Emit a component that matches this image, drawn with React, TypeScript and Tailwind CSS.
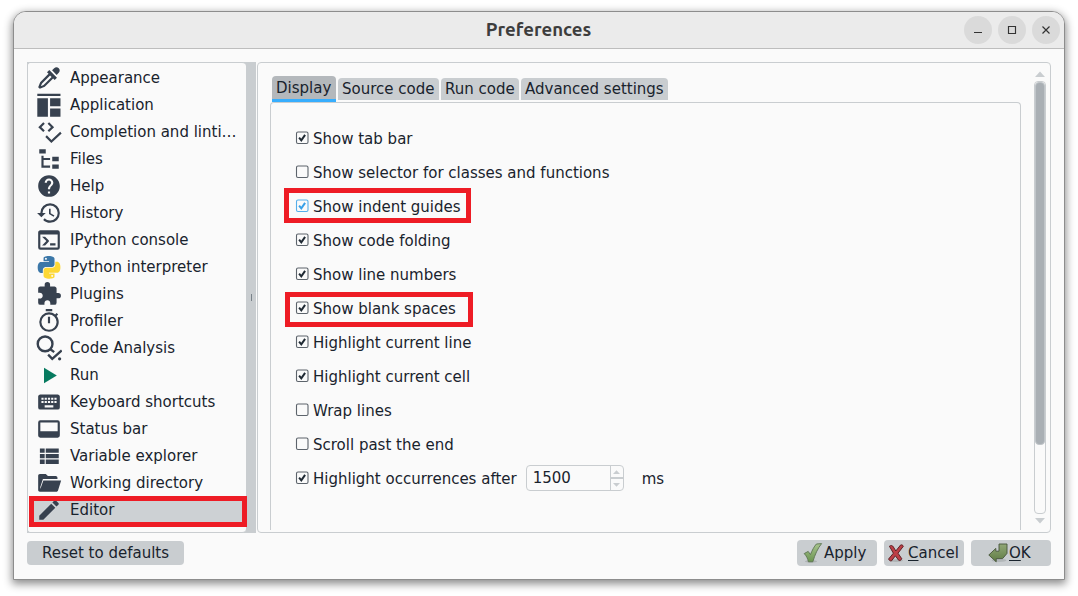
import React from "react";

type IconProps = { children: React.ReactNode };

function Glyph({ children }: IconProps) {
  return (
    <svg viewBox="0 0 24 24" className="mb-px h-[26px] w-[26px] shrink-0 fill-[#37414f]">
      {children}
    </svg>
  );
}

const PYTHON_HALF =
  "M14.25.18l.9.2.73.26.59.3.45.32.34.34.25.34.16.33.1.3.04.26.02.2-.01.13V8.5l-.05.63-.13.55-.21.46-.26.38-.3.31-.33.25-.35.19-.35.14-.33.1-.3.07-.26.04-.21.02H8.77l-.69.05-.59.14-.5.22-.41.27-.33.32-.27.35-.2.36-.15.37-.1.35-.07.32-.04.27-.02.21v3.06H3.17l-.21-.03-.28-.07-.32-.12-.35-.18-.36-.26-.36-.36-.35-.46-.32-.59-.28-.73-.21-.88-.14-1.05-.05-1.23.06-1.22.16-1.04.24-.87.32-.71.36-.57.4-.44.42-.33.42-.24.4-.16.36-.1.32-.05.24-.01h.16l.06.01h8.16v-.83H6.18l-.01-2.75-.02-.37.05-.34.11-.31.17-.28.25-.26.31-.23.38-.2.44-.18.51-.15.58-.12.64-.1.71-.06.77-.04.84-.02 1.27.05zm-6.3 1.98l-.23.33-.08.41.08.41.23.34.33.22.41.09.41-.09.33-.22.23-.34.08-.41-.08-.41-.23-.33-.33-.22-.41-.09-.41.09z";

const sections: { label: string; icon: React.ReactNode }[] = [
  {
    label: "Appearance",
    icon: (
      <path d="M19.35,11.72L17.22,13.85L15.81,12.43L8.1,20.14L3.5,22L2,20.5L3.86,15.9L11.57,8.19L10.15,6.78L12.28,4.65L19.35,11.72M16.76,3C17.93,1.83 19.83,1.83 21,3C22.17,4.17 22.17,6.07 21,7.24L19.08,9.16L14.84,4.92L16.76,3M5.56,17.03L4.5,19.5L6.97,18.44L14.4,11L13,9.6L5.56,17.03Z" />
    ),
  },
  {
    label: "Application",
    icon: <path d="M1.2 1.6H22.6V3.8H1.2ZM1.2 5.8H11V22.8H1.2ZM13 5.8H22.6V13.2H13ZM13 15.2H22.6V22.8H13Z" />,
  },
  {
    label: "Completion and linti…",
    icon: (
      <g fill="none" stroke="#37414f" strokeWidth="2">
        <path d="M7.4 3.6L3.5 7.5L7.4 11.4M11.4 3.6L15.3 7.5L11.4 11.4" />
        <path d="M9.3 15.8L14.2 20.7L23 12.6" />
      </g>
    ),
  },
  {
    label: "Files",
    icon: <path d="M3,3H9V7H3V3M15,10H21V14H15V10M15,17H21V21H15V17M13,13H7V18H13V20H7L5,20V9H7V11H13V13Z" />,
  },
  {
    label: "Help",
    icon: (
      <path d="M15.07,11.25L14.17,12.17C13.45,12.89 13,13.5 13,15H11V14.5C11,13.39 11.45,12.39 12.17,11.67L13.41,10.41C13.78,10.05 14,9.55 14,9C14,7.89 13.1,7 12,7A2,2 0 0,0 10,9H8A4,4 0 0,1 12,5A4,4 0 0,1 16,9C16,9.88 15.64,10.67 15.07,11.25M13,19H11V17H13M12,2A10,10 0 0,0 2,12A10,10 0 0,0 12,22A10,10 0 0,0 22,12C22,6.47 17.5,2 12,2Z" />
    ),
  },
  {
    label: "History",
    icon: (
      <path d="M13.5,8H12V13L16.28,15.54L17,14.33L13.5,12.25V8M13,3A9,9 0 0,0 4,12H1L4.96,16.03L9,12H6A7,7 0 0,1 13,5A7,7 0 0,1 20,12A7,7 0 0,1 13,19C11.07,19 9.32,18.21 8.06,16.94L6.64,18.36C8.27,20 10.5,21 13,21A9,9 0 0,0 22,12A9,9 0 0,0 13,3" />
    ),
  },
  {
    label: "IPython console",
    icon: (
      <path d="M20,19V7H4V19H20M20,3A2,2 0 0,1 22,5V19A2,2 0 0,1 20,21H4A2,2 0 0,1 2,19V5C2,3.89 2.9,3 4,3H20M13,17V15H18V17H13M9.58,13L5.57,9H8.4L11.7,12.3C12.09,12.69 12.09,13.33 11.7,13.72L8.42,17H5.59L9.58,13Z" />
    ),
  },
  {
    label: "Python interpreter",
    icon: (
      <g transform="translate(1.6 1.9) scale(.87)">
        <path fill="#3b77a8" d={PYTHON_HALF} />
        <path fill="#fdd835" d={PYTHON_HALF} transform="rotate(180 12 12)" />
      </g>
    ),
  },
  {
    label: "Plugins",
    icon: (
      <path d="M20.5,11H19V7C19,5.89 18.1,5 17,5H13V3.5A2.5,2.5 0 0,0 10.5,1A2.5,2.5 0 0,0 8,3.5V5H4A2,2 0 0,0 2,7V10.8H3.5C5,10.8 6.2,12 6.2,13.5C6.2,15 5,16.2 3.5,16.2H2V20A2,2 0 0,0 4,22H7.8V20.5C7.8,19 9,17.8 10.5,17.8C12,17.8 13.2,19 13.2,20.5V22H17A2,2 0 0,0 19,20V16H20.5A2.5,2.5 0 0,0 23,13.5A2.5,2.5 0 0,0 20.5,11Z" />
    ),
  },
  {
    label: "Profiler",
    icon: (
      <path d="M12,20A7,7 0 0,1 5,13A7,7 0 0,1 12,6A7,7 0 0,1 19,13A7,7 0 0,1 12,20M19.03,7.39L20.45,5.97C20,5.46 19.55,5 19.04,4.56L17.62,6C16.07,4.74 14.12,4 12,4A9,9 0 0,0 3,13A9,9 0 0,0 12,22C17,22 21,17.97 21,13C21,10.88 20.26,8.93 19.03,7.39M11,14H13V8H11M15,1H9V3H15V1Z" />
    ),
  },
  {
    label: "Code Analysis",
    icon: (
      <g>
        <g fill="none" stroke="#37414f" strokeWidth="2.2">
          <circle cx="8.4" cy="8.2" r="6.8" />
          <path d="M13 13L16.8 15.8M11.2 18.2L15 22L23.8 14.2" />
        </g>
        <circle cx="21.8" cy="22" r="1.5" />
      </g>
    ),
  },
  { label: "Run", icon: <path fill="#067a5f" d="M7.4 5.2V19.6L19.2 12.4Z" /> },
  {
    label: "Keyboard shortcuts",
    icon: (
      <path d="M19,10H17V8H19M19,13H17V11H19M16,10H14V8H16M16,13H14V11H16M16,17H8V15H16M7,10H5V8H7M7,13H5V11H7M8,11H10V13H8M8,8H10V10H8M11,11H13V13H11M11,8H13V10H11M20,5H4C2.89,5 2,5.89 2,7V17A2,2 0 0,0 4,19H20A2,2 0 0,0 22,17V7C22,5.89 21.1,5 20,5Z" />
    ),
  },
  {
    label: "Status bar",
    icon: <path d="M20,4H4A2,2 0 0,0 2,6V18A2,2 0 0,0 4,20H20A2,2 0 0,0 22,18V6A2,2 0 0,0 20,4M20,14H4V6H20V14Z" />,
  },
  {
    label: "Variable explorer",
    icon: (
      <path d="M3.6 5H8V9H3.6ZM9 5H21V9H9ZM3.6 10.2H8V14H3.6ZM9 10.2H21V14H9ZM3.6 15.2H8V19.4H3.6ZM9 15.2H21V19.4H9Z" />
    ),
  },
  {
    label: "Working directory",
    icon: (
      <path d="M3.6 20C2.7 20 2 19.3 2 18.4V5.4C2 4.5 2.7 3.8 3.6 3.8H9L11 5.6H18.2C19.1 5.6 19.8 6.3 19.8 7.2V8.2H6.4L4 15.6V17.5L6.8 9.6H23.2L20.4 18.6C20.1 19.5 19.6 20 18.6 20Z" />
    ),
  },
  {
    label: "Editor",
    icon: (
      <path d="M20.71,7.04C21.1,6.65 21.1,6 20.71,5.63L18.37,3.29C18,2.9 17.35,2.9 16.96,3.29L15.12,5.12L18.87,8.87M3,17.25V21H6.75L17.81,9.93L14.06,6.18L3,17.25Z" />
    ),
  },
];

type Option = { label: string; checked: boolean; active?: boolean; mark?: string };

const options: Option[] = [
  { label: "Show tab bar", checked: true },
  { label: "Show selector for classes and functions", checked: false },
  { label: "Show indent guides", checked: true, active: true, mark: "left-[-12px] top-[-1px] w-[187px]" },
  { label: "Show code folding", checked: true },
  { label: "Show line numbers", checked: true },
  { label: "Show blank spaces", checked: true, mark: "left-[-11px] top-[1px] w-[188px]" },
  { label: "Highlight current line", checked: true },
  { label: "Highlight current cell", checked: true },
  { label: "Wrap lines", checked: false },
  { label: "Scroll past the end", checked: false },
  { label: "Highlight occurrences after", checked: true },
];

function CheckBox({ checked, active }: { checked: boolean; active?: boolean }) {
  const color = active ? "#38a0e8" : "#1f2933";
  return (
    <svg viewBox="0 0 13 13" className="mb-px h-[13px] w-[13px] shrink-0 overflow-visible" fill="none">
      <rect x="0.5" y="1" width="11.5" height="11.5" rx="1.5" stroke={active ? "#55aeea" : "#5c636b"} strokeWidth="1.1" />
      {checked && <path d="M3.1 6.6L5.3 9.3L9.1 3.9" stroke={color} strokeWidth="2" />}
    </svg>
  );
}

function Arrow({ down, className }: { down?: boolean; className: string }) {
  return (
    <svg viewBox="0 0 10 6" preserveAspectRatio="none" className={className}>
      <path d={down ? "M0 0H10L5 5.5Z" : "M0 6H10L5 0.5Z"} fill="#c9cdd0" />
    </svg>
  );
}

function SpinBox() {
  return (
    <div className="ml-[9px] flex h-[26px] w-[98px] overflow-hidden rounded-[4px] border border-[#c9cdd0]">
      <div className="flex-1 pl-[6px] leading-[24px]">1500</div>
      <div className="flex w-[13px] flex-col border-l border-[#c9cdd0]">
        <div className="flex flex-1 items-center justify-center border-b-2 border-[#c9cdd0]">
          <Arrow className="h-[4px] w-[7px]" />
        </div>
        <div className="flex flex-1 items-center justify-center">
          <Arrow down className="h-[4px] w-[7px]" />
        </div>
      </div>
    </div>
  );
}

function TitleBar() {
  return (
    <header className="flex h-[37px] shrink-0 items-center border-b border-[#bdbdbd] bg-[#ebebeb] pr-[4px]">
      <div className="flex-1 pl-[99px] text-center font-['Ubuntu','Noto_Sans',sans-serif] text-[18.6px] font-bold text-[#3d3d3d]">
        Preferences
      </div>
      <div className="flex gap-[6px]">
        {["M10 18.5H18", "M10.5 12.5H17.5V19.5H10.5Z", "M10.5 12.5L17.5 19.5M17.5 12.5L10.5 19.5"].map((d) => (
          <svg key={d} viewBox="0 2 28 28" className="h-[28px] w-[28px] rounded-full bg-[#dadada]" fill="none">
            <path d={d} stroke="#333" strokeWidth="1.15" />
          </svg>
        ))}
      </div>
    </header>
  );
}

function Sidebar() {
  return (
    <nav className="w-[219px] shrink-0 rounded-l-[3px] rounded-r-[4px] border border-[#c9cdd0] border-r-0 bg-[#fafafa] pl-[2px] pt-[2px]">
      {sections.map((s) => (
        <div
          key={s.label}
          className={
            s.label === "Editor"
              ? "relative flex h-[27px] items-center bg-[#cdd1d4] pl-[6px]"
              : "flex h-[27px] items-center pl-[6px]"
          }
        >
          <Glyph>{s.icon}</Glyph>
          <span className="-mt-[2px] ml-[8px] whitespace-nowrap">{s.label}</span>
          {s.label === "Editor" && (
            <span className="absolute left-[-1px] top-[-1px] h-[31px] w-[218px] border-[5px] border-[#ee1c25]" />
          )}
        </div>
      ))}
    </nav>
  );
}

function Content() {
  return (
    <section className="flex flex-1 rounded-[4px] border border-[#c9cdd0] bg-[#fafafa]">
      <div className="ml-[12px] flex w-[751px] flex-col pt-[13px]">
        <div className="flex h-[26px] items-start gap-[2px] pl-[2px]">
          <div className="h-[26px] w-[64px] rounded-t-[4px] border-b-[3px] border-[#37aefe] bg-[#b4b8bc] pl-[4px] leading-[24px]">Display</div>
          <div className="mt-[2px] h-[22px] w-[101px] rounded-t-[4px] bg-[#c9cdd0] pl-[4px] leading-[22px]">Source code</div>
          <div className="mt-[2px] h-[22px] w-[78px] rounded-t-[4px] bg-[#c9cdd0] pl-[4px] leading-[22px]">Run code</div>
          <div className="mt-[2px] h-[22px] w-[147px] rounded-t-[4px] bg-[#c9cdd0] pl-[4px] leading-[22px]">Advanced settings</div>
        </div>
        <div className="h-[428px] rounded-t-[4px] border border-b-0 border-[#c9cdd0] pl-[25px] pt-[18px]">
          {options.map((o, i) => (
            <div key={o.label} className="relative flex h-[34px] items-center">
              <CheckBox checked={o.checked} active={o.active} />
              <span className="ml-[4px] whitespace-nowrap pt-[2px]">{o.label}</span>
              {i === 10 && (
                <>
                  <SpinBox />
                  <span className="ml-[18px] pt-[2px]">ms</span>
                </>
              )}
              {o.mark && <span className={"absolute h-[35px] border-[5px] border-[#ee1c25] " + o.mark} />}
            </div>
          ))}
        </div>
      </div>
      <div className="ml-[13px] flex w-[12px] flex-col items-center pt-[8px]">
        <Arrow className="h-[6px] w-[10px]" />
        <div className="mt-[4px] h-[433px] w-[12px] rounded-[4px] border border-[#c9cdd0]">
          <div className="h-[363px] rounded-[4px] border border-[#c0c5c9] bg-[#a9afb4]" />
        </div>
        <Arrow down className="mt-[4px] h-[6px] w-[10px]" />
      </div>
    </section>
  );
}

function ApplyIcon() {
  return (
    <svg viewBox="0 0 20 20" className="h-[20px] w-[20px]">
      <defs>
        <linearGradient id="apply" x1="0" y1="0" x2="0" y2="1">
          <stop offset="0" stopColor="#a9c48f" />
          <stop offset="1" stopColor="#6a9450" />
        </linearGradient>
      </defs>
      <ellipse cx="8" cy="18.4" rx="6" ry="1.2" fill="#aeb3b5" />
      <path d="M1.2 10.6L5.2 8.4L7.4 11.6C9.2 7.4 11 3.6 13.4 1L18.6 .6C14.6 5.4 12 11.6 9.8 18.8H5.4C4.8 15.4 3.2 12.6 1.2 10.6Z" fill="url(#apply)" stroke="#5b7350" strokeWidth=".9" strokeLinejoin="round" />
    </svg>
  );
}

function CancelIcon() {
  return (
    <svg viewBox="0 0 20 20" className="h-[20px] w-[20px]">
      <ellipse cx="9" cy="17.6" rx="7" ry="1.4" fill="#aeb3b5" />
      <path d="M2.4 3.2C4 2 5.6 2.4 6.4 4L8.8 8L13.6 2C14.8 1.6 15.8 2.2 16.4 3.2L11 10.2L14.8 15.8C14 17.4 12.6 18 11.6 17.2L8.4 12.8L4.4 18C3 18 2 17.2 1.6 16L6.4 10.2Z" fill="#bd3f46" stroke="#5f2227" strokeWidth="1" strokeLinejoin="round" />
    </svg>
  );
}

function OkIcon() {
  return (
    <svg viewBox="0 0 20 20" className="h-[20px] w-[20px]">
      <defs>
        <linearGradient id="ok" x1="0" y1="0" x2="0" y2="1">
          <stop offset="0" stopColor="#91a777" />
          <stop offset="1" stopColor="#5f7c43" />
        </linearGradient>
      </defs>
      <ellipse cx="11" cy="17.4" rx="7.4" ry="1.6" fill="#b1b6b8" />
      <path d="M.8 12L7.8 5.4V8.2H11V1H19V10.4L14.6 15.6H8.2V18.8Z" fill="url(#ok)" stroke="#46553a" strokeWidth=".9" strokeLinejoin="round" />
    </svg>
  );
}

export default function App() {
  return (
    <div className="h-[596px] w-[1078px] overflow-hidden bg-white pl-[13px] pt-[11px] font-['DejaVu_Sans',sans-serif] text-[15px] leading-[20px] text-[#19232d]">
      <div className="flex h-[569px] w-[1052px] flex-col overflow-hidden rounded-t-[13px] border border-[#8d8d8d] bg-[#fafafa] shadow-[0_3px_9px_1px_rgba(0,0,0,0.45)]">
        <TitleBar />
        <main className="flex flex-1 flex-col pl-[13px] pr-[13px] pt-[13px]">
          <div className="flex h-[471px] shrink-0">
            <div className="flex bg-[#c9cdd0]">
              <Sidebar />
              <div className="flex w-[10px] items-center justify-center">
                <div className="h-[7px] w-px bg-[#788188]" />
              </div>
            </div>
            <div className="w-px" />
            <Content />
          </div>
          <footer className="mt-[7px] flex items-center gap-[7px]">
            <button className="mr-auto h-[24px] w-[157px] rounded-[4px] bg-[#c9cdd0] leading-[23px]">Reset to defaults</button>
            <button className="flex h-[26px] w-[80px] items-center rounded-[4px] bg-[#c9cdd0] pl-[6px]">
              <ApplyIcon />
              <span className="ml-px">Apply</span>
            </button>
            <button className="flex h-[26px] w-[80px] items-center rounded-[4px] bg-[#c9cdd0] pl-[3px]">
              <CancelIcon />
              <span className="ml-px"><span className="underline underline-offset-2">C</span>ancel</span>
            </button>
            <button className="flex h-[26px] w-[80px] items-center rounded-[4px] bg-[#c9cdd0] pl-[17px]">
              <OkIcon />
              <span className="ml-px"><span className="underline underline-offset-2">O</span>K</span>
            </button>
          </footer>
        </main>
      </div>
    </div>
  );
}
